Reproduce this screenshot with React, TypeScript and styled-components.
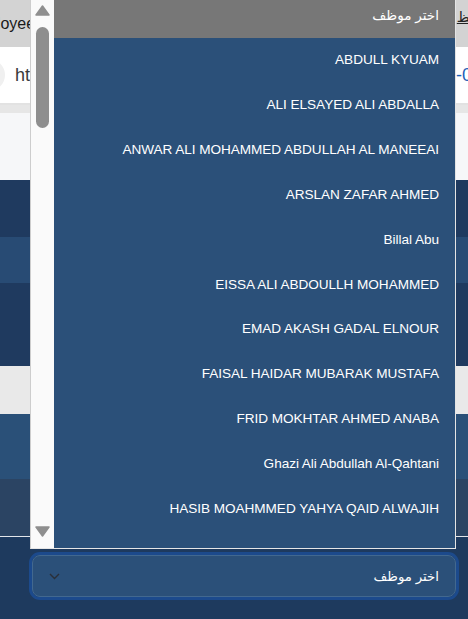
import styled, { createGlobalStyle } from 'styled-components';

const GlobalStyle = createGlobalStyle`
    html, body {
        margin: 0;
        padding: 0;
        background: #1e3a5e;
        overflow: hidden;
    }
`;

const Page = styled.div`
    position: relative;
    width: 468px;
    height: 619px;
    overflow: hidden;
    display: flex;
    flex-direction: column;
    font-family: "Liberation Sans", "DejaVu Sans", sans-serif;
`;

const Band = styled.div<{ $h: number; $bg: string }>`
    flex: 0 0 ${props => props.$h}px;
    background: ${props => props.$bg};
    box-sizing: border-box;
`;

const TabStrip = styled.div`
    flex: 0 0 47px;
    background: #d3d3d3;
    display: flex;
    align-items: center;
    justify-content: space-between;
    overflow: hidden;
`;

const TabTitle = styled.span`
    margin-left: -36px;
    font-size: 16px;
    color: #1a1a1a;
    white-space: nowrap;
`;

const TabAccent = styled.span`
    margin-right: -6px;
    margin-top: -14px;
    font-size: 14px;
    color: #222;
    text-decoration: underline;
`;

const AddressRow = styled.div`
    flex: 0 0 58px;
    background: #fff;
    border-bottom: 2px solid #e2e2e2;
    box-sizing: border-box;
    display: flex;
    align-items: center;
    overflow: hidden;
`;

const SiteBadge = styled.div`
    width: 32px;
    height: 32px;
    margin-left: -27px;
    border-radius: 50%;
    background: #f0f0f0;
`;

const Url = styled.span`
    margin-left: 10px;
    font-size: 18px;
    color: #3a3a3a;
    white-space: nowrap;
`;

const UrlTail = styled.span`
    margin-left: auto;
    margin-right: -4px;
    font-size: 18px;
    color: #1d5fb8;
`;

const Footer = styled.div`
    flex: 1;
    background: #1e3a5e;
    border-top: 1px solid #e3e6ea;
    padding: 15px 0 0 29px;
`;

const SelectRing = styled.div`
    width: 430px;
    box-sizing: border-box;
    border: 3px solid #1c4a8c;
    border-radius: 11px;
`;

const SelectBox = styled.div`
    height: 42px;
    box-sizing: border-box;
    background: #2b5079;
    border: 1px solid #42688f;
    border-radius: 8px;
    direction: rtl;
    display: flex;
    align-items: center;
    justify-content: space-between;
    padding: 0 16px;
    color: #fff;
    font-size: 13.333px;
`;

const Popup = styled.div`
    position: absolute;
    left: 30px;
    top: 0;
    width: 426px;
    height: 549px;
    box-sizing: border-box;
    display: flex;
    background: #2b5079;
    border-left: 1px solid #cdcdcd;
    border-right: 1px solid #e4e4e4;
    border-bottom: 1px solid #e6e6e6;
`;

const ScrollTrack = styled.div`
    flex: 0 0 23px;
    background: #fafafa;
    display: flex;
    flex-direction: column;
    align-items: center;
    padding: 5px 0 11px;
    box-sizing: border-box;
`;

const Thumb = styled.div`
    width: 13px;
    height: 101px;
    margin-top: 11px;
    border-radius: 7px;
    background: #8e8e8e;
`;

const Spacer = styled.div`
    flex: 1;
`;

const List = styled.div`
    flex: 1;
    overflow: hidden;
    direction: rtl;
`;

const Options = styled.div`
    margin-top: -7.35px;
`;

const Option = styled.div<{ $active?: boolean }>`
    height: 44.85px;
    display: flex;
    align-items: center;
    padding: 0 16px;
    background: ${props => props.$active ? '#777777' : 'transparent'};
    color: #fff;
    font-size: 13.6px;
    letter-spacing: -0.05px;
    white-space: nowrap;
`;

const Arrow = ({ down }: { down?: boolean }) => (
    <svg width="15" height="11" viewBox="0 0 15 11">
        <polygon
            points={down ? '1,1 14,1 7.5,10' : '1,10 14,10 7.5,1'}
            fill="#8f8f8f"
            stroke="#8f8f8f"
            strokeWidth="1.5"
            strokeLinejoin="round" />
    </svg>
);

const Chevron = () => (
    <svg width="11" height="7" viewBox="0 0 11 7">
        <polyline points="1,1 5.5,5.5 10,1" fill="none" stroke="#2a2f38" strokeWidth="1.4" />
    </svg>
);

const PLACEHOLDER = 'اختر موظف';

const EMPLOYEES = [
    'ABDULL KYUAM',
    'ALI ELSAYED ALI ABDALLA',
    'ANWAR ALI MOHAMMED ABDULLAH AL MANEEAI',
    'ARSLAN ZAFAR AHMED',
    'Billal Abu',
    'EISSA ALI ABDOULLH MOHAMMED',
    'EMAD AKASH GADAL ELNOUR',
    'FAISAL HAIDAR MUBARAK MUSTAFA',
    'FRID MOKHTAR AHMED ANABA',
    'Ghazi Ali Abdullah Al-Qahtani',
    'HASIB MOAHMMED YAHYA QAID ALWAJIH',
    'HASSAN ALI HASSAN'
];

const App = () => (
    <Page>
        <GlobalStyle />
        <TabStrip>
            <TabTitle>Employees</TabTitle>
            <TabAccent>نظ</TabAccent>
        </TabStrip>
        <AddressRow>
            <SiteBadge />
            <Url>https://hr.local/employees</Url>
            <UrlTail>-0</UrlTail>
        </AddressRow>
        <Band $h={8} $bg="#e6e6e6" />
        <Band $h={67} $bg="#f6f7f9" />
        <Band $h={57} $bg="#1f3a5f" />
        <Band $h={46} $bg="#284b74" />
        <Band $h={83} $bg="#1f3a5f" />
        <Band $h={48} $bg="#e9e9e9" />
        <Band $h={65} $bg="#2a5078" />
        <Band $h={57} $bg="#2b4463" />
        <Footer>
            <SelectRing>
                <SelectBox>
                    <span>{PLACEHOLDER}</span>
                    <Chevron />
                </SelectBox>
            </SelectRing>
        </Footer>

        <Popup>
            <ScrollTrack>
                <Arrow />
                <Thumb />
                <Spacer />
                <Arrow down />
            </ScrollTrack>
            <List>
                <Options>
                    <Option $active>{PLACEHOLDER}</Option>
                    {EMPLOYEES.map(name =>
                        <Option key={name}>{name}</Option>
                    )}
                </Options>
            </List>
        </Popup>
    </Page>
);

export default App;
